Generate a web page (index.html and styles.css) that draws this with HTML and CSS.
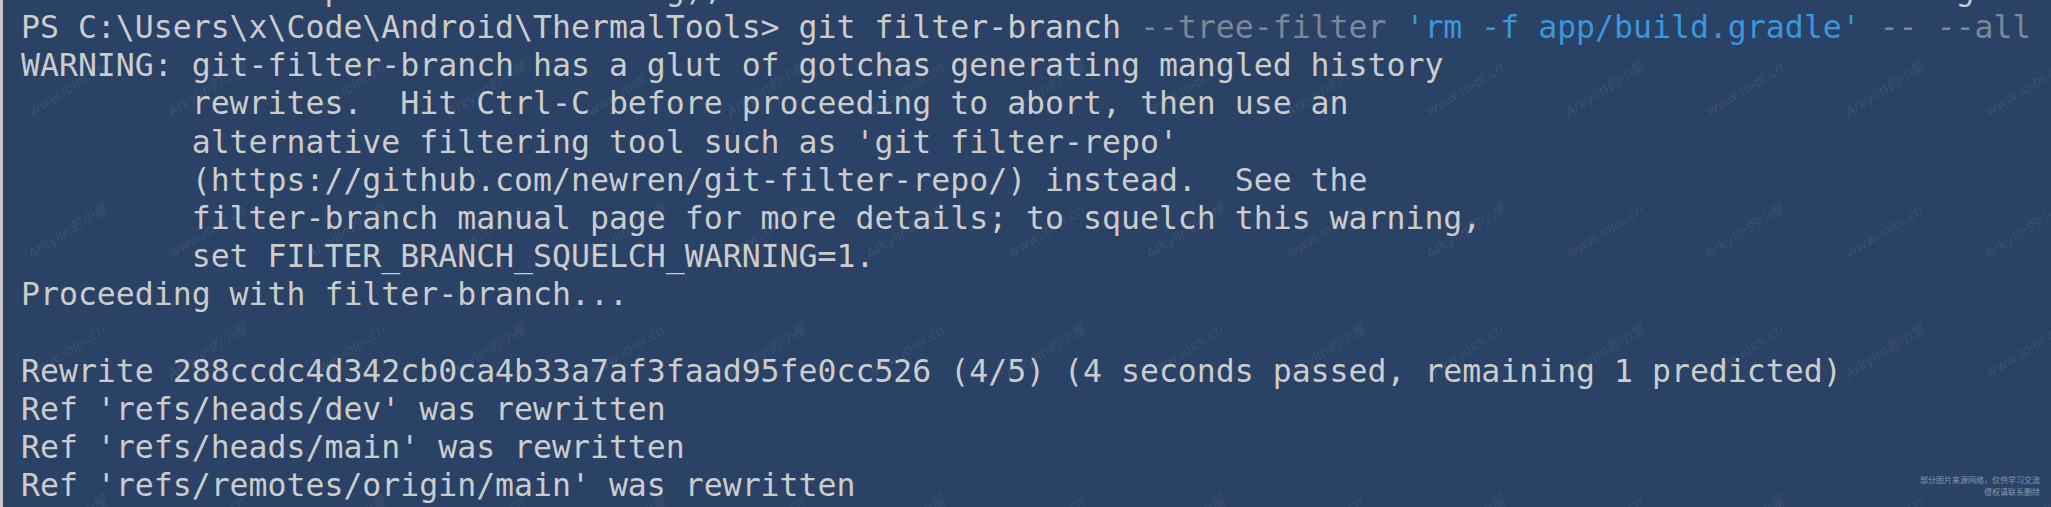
FILE: index.html
```html
<!DOCTYPE html>
<html lang="en">
<head>
<meta charset="utf-8">
<title>PowerShell - git filter-branch</title>
<link rel="stylesheet" href="styles.css">
</head>
<body>
<main class="term">
  <pre class="out"><span class="ln">                p                 g),                                                                 g</span>
<span class="ln">PS C:\Users\x\Code\Android\ThermalTools&gt; git filter-branch <span class="param">--tree-filter</span> <span class="str">'rm -f app/build.gradle'</span> <span class="param">-- --all</span></span>
<span class="ln">WARNING: git-filter-branch has a glut of gotchas generating mangled history</span>
<span class="ln">         rewrites.  Hit Ctrl-C before proceeding to abort, then use an</span>
<span class="ln">         alternative filtering tool such as 'git filter-repo'</span>
<span class="ln">         (https://github.com/newren/git-filter-repo/) instead.  See the</span>
<span class="ln">         filter-branch manual page for more details; to squelch this warning,</span>
<span class="ln">         set FILTER_BRANCH_SQUELCH_WARNING=1.</span>
<span class="ln">Proceeding with filter-branch...</span>
<span class="ln"></span>
<span class="ln">Rewrite 288ccdc4d342cb0ca4b33a7af3faad95fe0cc526 (4/5) (4 seconds passed, remaining 1 predicted)</span>
<span class="ln">Ref 'refs/heads/dev' was rewritten</span>
<span class="ln">Ref 'refs/heads/main' was rewritten</span>
<span class="ln">Ref 'refs/remotes/origin/main' was rewritten</span></pre>

  <div class="wm" aria-hidden="true">
    <div class="wm-row r1">
      <span class="w"><i>www.ioioi.cn</i></span><span class="w"><i>Arkylin的小屋</i></span><span class="w"><i>www.ioioi.cn</i></span><span class="w"><i>Arkylin的小屋</i></span><span class="w"><i>www.ioioi.cn</i></span><span class="w"><i>Arkylin的小屋</i></span><span class="w"><i>www.ioioi.cn</i></span><span class="w"><i>Arkylin的小屋</i></span><span class="w"><i>www.ioioi.cn</i></span><span class="w"><i>Arkylin的小屋</i></span><span class="w"><i>www.ioioi.cn</i></span><span class="w"><i>Arkylin的小屋</i></span><span class="w"><i>www.ioioi.cn</i></span><span class="w"><i>Arkylin的小屋</i></span><span class="w"><i>www.ioioi.cn</i></span>
    </div>
    <div class="wm-row r2">
      <span class="w"><i>Arkylin的小屋</i></span><span class="w"><i>www.ioioi.cn</i></span><span class="w"><i>Arkylin的小屋</i></span><span class="w"><i>www.ioioi.cn</i></span><span class="w"><i>Arkylin的小屋</i></span><span class="w"><i>www.ioioi.cn</i></span><span class="w"><i>Arkylin的小屋</i></span><span class="w"><i>www.ioioi.cn</i></span><span class="w"><i>Arkylin的小屋</i></span><span class="w"><i>www.ioioi.cn</i></span><span class="w"><i>Arkylin的小屋</i></span><span class="w"><i>www.ioioi.cn</i></span><span class="w"><i>Arkylin的小屋</i></span><span class="w"><i>www.ioioi.cn</i></span><span class="w"><i>Arkylin的小屋</i></span>
    </div>
    <div class="wm-row r3">
      <span class="w"><i>www.ioioi.cn</i></span><span class="w"><i>Arkylin的小屋</i></span><span class="w"><i>www.ioioi.cn</i></span><span class="w"><i>Arkylin的小屋</i></span><span class="w"><i>www.ioioi.cn</i></span><span class="w"><i>Arkylin的小屋</i></span><span class="w"><i>www.ioioi.cn</i></span><span class="w"><i>Arkylin的小屋</i></span><span class="w"><i>www.ioioi.cn</i></span><span class="w"><i>Arkylin的小屋</i></span><span class="w"><i>www.ioioi.cn</i></span><span class="w"><i>Arkylin的小屋</i></span><span class="w"><i>www.ioioi.cn</i></span><span class="w"><i>Arkylin的小屋</i></span><span class="w"><i>www.ioioi.cn</i></span>
    </div>
    <div class="wm-row r4">
      <span class="w"><i>Arkylin的小屋</i></span><span class="w"><i>www.ioioi.cn</i></span><span class="w"><i>Arkylin的小屋</i></span><span class="w"><i>www.ioioi.cn</i></span><span class="w"><i>Arkylin的小屋</i></span><span class="w"><i>www.ioioi.cn</i></span><span class="w"><i>Arkylin的小屋</i></span><span class="w"><i>www.ioioi.cn</i></span><span class="w"><i>Arkylin的小屋</i></span><span class="w"><i>www.ioioi.cn</i></span><span class="w"><i>Arkylin的小屋</i></span><span class="w"><i>www.ioioi.cn</i></span><span class="w"><i>Arkylin的小屋</i></span><span class="w"><i>www.ioioi.cn</i></span><span class="w"><i>Arkylin的小屋</i></span>
    </div>
  </div>

  <p class="notice">部分图片来源网络，仅供学习交流<br>侵权请联系删除</p>
</main>
</body>
</html>
```

FILE: styles.css
```css
html, body {
  margin: 0;
  padding: 0;
  background: #2a4266;
}

body {
  width: 2051px;
  height: 507px;
  overflow: hidden;
}

.term {
  position: relative;
  box-sizing: border-box;
  width: 2051px;
  height: 507px;
  overflow: hidden;
  background: #2a4266;
  border-left: 3px solid #c8c8c8;
  padding-left: 18px;
}

.out {
  margin: -30.2px 0 0 0;
  font-family: "DejaVu Sans Mono", monospace;
  font-size: 31.5px;
  line-height: 38.17px;
  color: #cccccc;
  white-space: pre;
}

.param {
  color: #7d8796;
}

.str {
  color: #3a96dd;
}

/* watermark overlay */
.wm {
  position: absolute;
  left: -6px;
  top: 0;
  width: 2200px;
  pointer-events: none;
}

.wm-row {
  display: flex;
  height: 0;
}

.r1 { margin-top: 89px; }
.r2 { margin-top: 142px; }
.r3 { margin-top: 120px; }
.r4 { margin-top: 172px; }

.w {
  flex: 0 0 139.8px;
  display: flex;
  justify-content: center;
  align-items: center;
  height: 0;
}

.w i {
  display: block;
  transform: rotate(-32deg);
  font-family: "DejaVu Sans", "Noto Sans CJK SC", sans-serif;
  font-style: italic;
  font-size: 14px;
  line-height: 1;
  color: rgba(255, 255, 255, 0.09);
  white-space: nowrap;
}

.notice {
  position: absolute;
  right: 11px;
  bottom: 9px;
  margin: 0;
  text-align: right;
  font-family: "Noto Sans CJK SC", sans-serif;
  font-size: 8px;
  line-height: 12px;
  color: rgba(255, 255, 255, 0.45);
}
```
